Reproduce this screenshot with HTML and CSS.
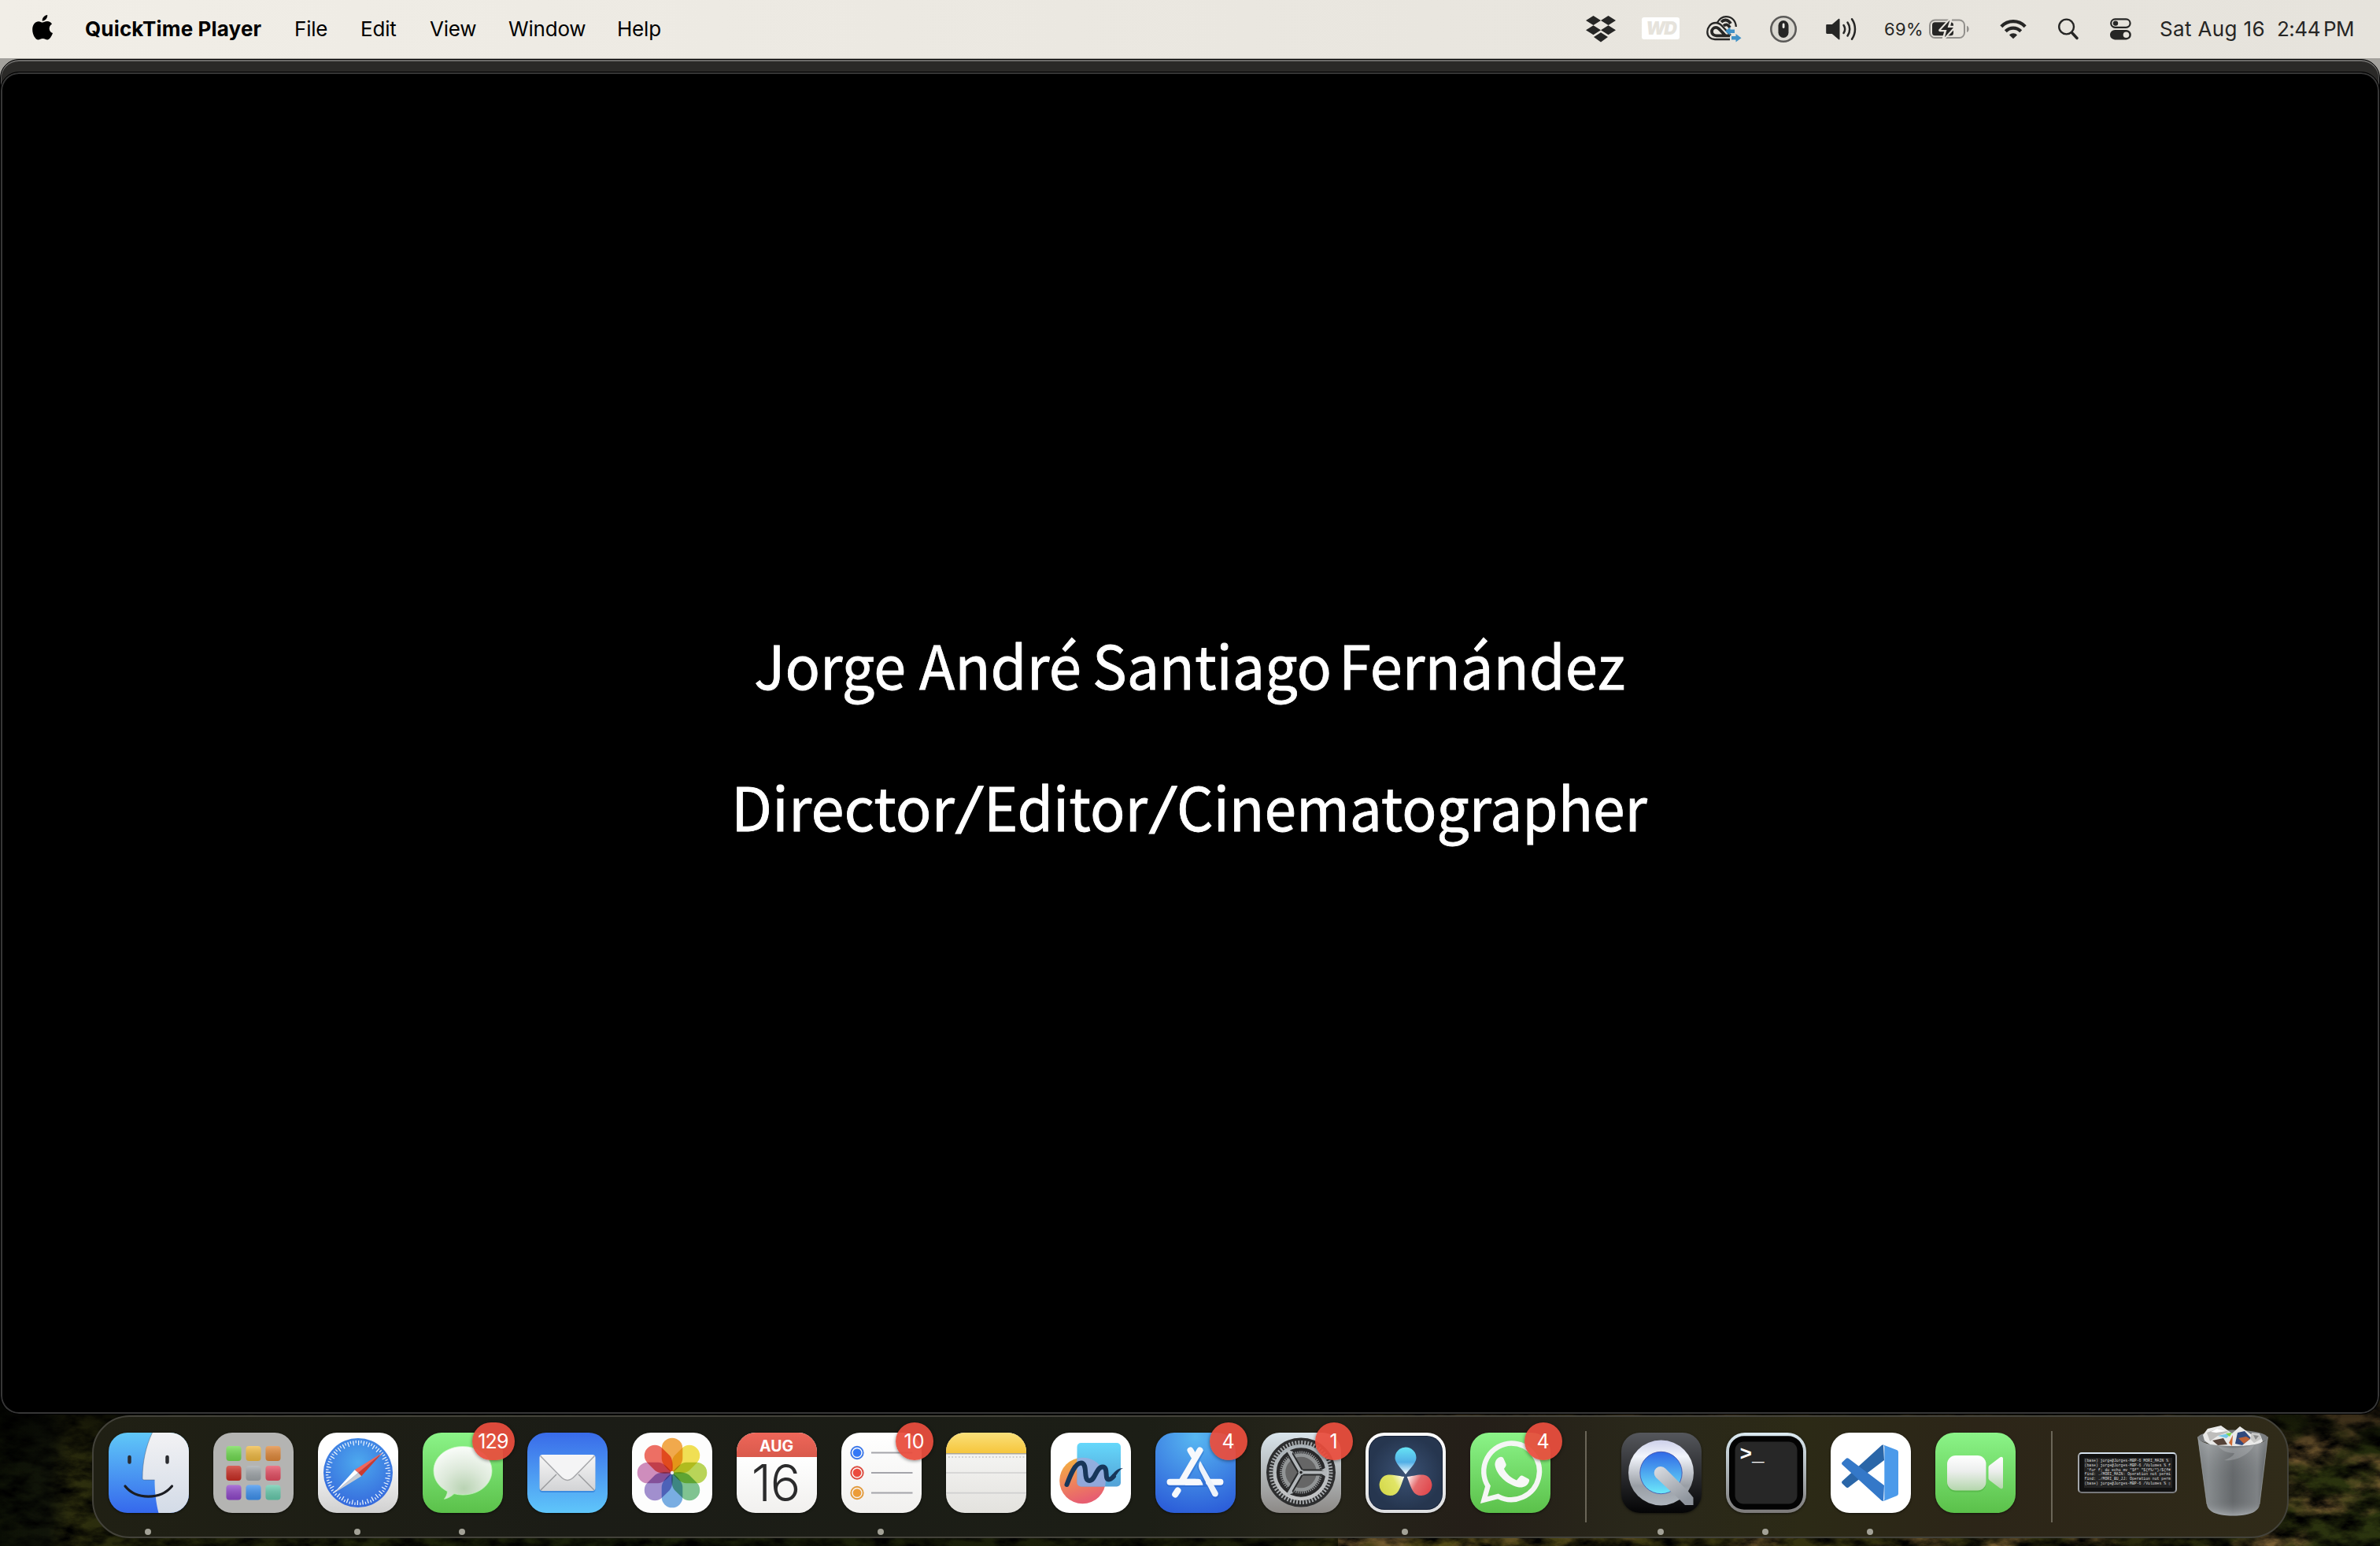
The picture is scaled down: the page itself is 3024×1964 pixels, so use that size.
FILE: index.html
```html
<!DOCTYPE html>
<html lang="en">
<head>
<meta charset="utf-8">
<title>QuickTime Player</title>
<link rel="stylesheet" href="styles.css">
</head>
<body>
<header class="menubar">
  <nav class="menus">
    <svg class="apple" width="26" height="32" viewBox="0 0 26 32"><path d="M13 9.600c1.500 0 3.200-1.500 6-1.500 2.700 0 4.900 1.400 6 3.300-4.800 2.900-4.200 9.700 1 11.700-1.300 3.900-4 8.400-6.800 8.400-2.300 0-3-1.400-5.800-1.400s-3.700 1.400-5.800 1.400C4 31.500.2 25 .2 18.500.2 12 4 8.200 8 8.200c2.300 0 3.700 1.400 5 1.400ZM12.700 7.700c-.3-4 3-7.500 6.500-7.700.4 4.200-3 7.700-6.500 7.700Z"/></svg>
    <span class="menu app">QuickTime Player</span>
    <span class="menu file">File</span>
    <span class="menu edit">Edit</span>
    <span class="menu view">View</span>
    <span class="menu win">Window</span>
    <span class="menu help">Help</span>
  </nav>
  <div class="status">
    <svg width="38" height="34" viewBox="0 0 38 34"><path d="M9.500 0l9.500 6-9.500 6L0 6ZM28.500 0L38 6l-9.500 6L19 6ZM9.500 12.200l9.500 6-9.500 6-9.500-6ZM28.500 12.200l9.500 6-9.500 6-9.500-6ZM19 21.300l9 5.700-9 6.500-9-6.500Z"/></svg>
    <div class="wd">WD</div>
    <svg class="cc" width="46" height="34" viewBox="0 0 46 34" fill="none" stroke="#262625" stroke-width="2.300"><path d="M30 30H11C5 30 1.300 26 1.300 20.500S5.300 9 12 9c3 0 5.500 1.200 8 4l11 12"/><path d="M14 8.500C17 3.500 20.500 1.200 25 1.200c7.500 0 12.500 5.300 12.800 12.800"/><path d="M30 25.300H13c-3.800 0-6-2-6-5s2.200-5.400 5.200-5.400c3.500 0 5.500 3.500 12 10.300" stroke-width="3.800"/><path d="M19 8c4-4 9-3 12 2M22 13c3-3 6-1.500 8 2" stroke-width="3.800"/><path d="M24 19.500l6.500-5v3h5.500v4.500h-5.500v3ZM32 26h5.500v-3l7 5.300-7 5.200v-3H32Z" fill="#3f91c7" stroke="none"/></svg>
    <svg class="mouse" width="34" height="34" viewBox="0 0 34 34"><circle cx="17" cy="17" r="15.700" fill="#dad8d1" stroke="#5b5a58" stroke-width="2.600"/><rect x="10.500" y="6" width="13" height="22" rx="6.500"/><rect x="15.700" y="9.500" width="2.800" height="6.500" rx="1.400" fill="#f2f0ea"/></svg>
    <svg class="speaker" width="40" height="30" viewBox="0 0 40 30"><path d="M1.500 9h6.300L16 2c.8-.6 1.500-.2 1.500.7v24.800c0 .9-.8 1.200-1.500.6L7.800 21H1.500C.6 21 .2 20.500.2 19.600V10.400C.2 9.500.6 9 1.500 9Z"/><path d="M22.500 10c2 3 2 7 0 10M27.500 6.500c3.600 5 3.600 12 0 17M33 2.200c5.300 7.600 5.300 18 0 25.600" fill="none" stroke="#262625" stroke-width="2.500" stroke-linecap="round"/></svg>
    <span class="percent">69%</span>
    <svg class="battery" width="52" height="28" viewBox="0 0 52 28"><rect x="1" y="2.500" width="44" height="22.500" rx="6.500" fill="none" stroke="#92908c" stroke-width="2"/><rect x="4" y="5.300" width="27" height="17" rx="3.500"/><path d="M48 9.700c3.500 1 3.500 7.300 0 8.400Z" fill="#92908c"/><path d="M27.500 1L14 15.500h7.500L18.500 26 32.500 11.500H25Z" stroke="#e8e5de" stroke-width="3.500" stroke-linejoin="round"/><path d="M26.500 2.500L15 15h7.500L19.800 24.500 31 12h-7.500Z"/></svg>
    <svg class="wifi" width="34" height="26" viewBox="0 0 34 26"><path d="M17 25.300l-5-4.800c2.600-3 7.400-3 10 0Z"/><path d="M1.800 9.700c8.400-8.800 22-8.800 30.400 0M7.300 15.700c5.400-5.500 14-5.500 19.400 0" fill="none" stroke="#262625" stroke-width="4.200"/></svg>
    <svg class="search" width="26" height="28" viewBox="0 0 26 28" fill="none" stroke="#262625"><circle cx="10.600" cy="11" r="9.400" stroke-width="2.400"/><path d="M17.500 18.500l6.500 7" stroke-width="3.400" stroke-linecap="round"/></svg>
    <svg class="toggles" width="28" height="28" viewBox="0 0 28 28"><rect x="1.200" y="1.400" width="24.400" height="10.400" rx="5.200" fill="none" stroke="#262625" stroke-width="2.200"/><circle cx="7" cy="6.600" r="3.200"/><rect x="0" y="15" width="26.800" height="12.400" rx="6.200"/><circle cx="20.500" cy="21.200" r="3.800" fill="#e6e3dc"/></svg>
    <span class="date">Sat Aug 16</span>
    <span class="time">2:44<i></i>PM</span>
  </div>
</header>

<main class="desktop">
  <svg class="wallpaper" width="3024" height="190" viewBox="0 0 3024 190" preserveAspectRatio="none">
    <defs>
      <filter id="leaves" x="0" y="0" width="100%" height="100%"><feTurbulence type="fractalNoise" baseFrequency=".03 .06" numOctaves="5" seed="7"/><feColorMatrix values="0 0 0 0 0  0 0 0 0 0  0 0 0 0 0  2.200 0 0 0 -.7"/></filter>
      <filter id="bark" x="0" y="0" width="100%" height="100%"><feTurbulence type="fractalNoise" baseFrequency=".012 .02" numOctaves="5" seed="3"/><feColorMatrix values="0 0 0 0 .24  0 0 0 0 .14  0 0 0 0 .04  0 4 0 0 -1.800"/></filter>
      <linearGradient id="ground"><stop offset="0" stop-color="#0f1406"/><stop offset=".02" stop-color="#12160a"/><stop offset=".03" stop-color="#34350f"/><stop offset=".06" stop-color="#282b0c"/><stop offset=".25" stop-color="#1c240a"/><stop offset=".54" stop-color="#1d2009"/><stop offset=".6" stop-color="#5e5419"/><stop offset=".7" stop-color="#3f3c12"/><stop offset=".9" stop-color="#30300e"/><stop offset="1" stop-color="#2f3a10"/></linearGradient>
      <linearGradient id="dusk" x2="0" y2="1"><stop offset="0" stop-opacity=".75"/><stop offset=".5" stop-opacity=".1"/><stop offset="1" stop-opacity=".1"/></linearGradient>
    </defs>
    <rect width="3024" height="190" fill="url(#ground)"/><rect x="1700" width="1324" height="190" filter="url(#bark)"/><rect width="3024" height="190" filter="url(#leaves)"/><rect width="3024" height="190" fill="url(#dusk)"/>
  </svg>
  <div class="window back"></div>
  <section class="window front">
    <svg class="credits" width="1240" height="320" viewBox="0 0 1240 320">
      <text y="96"><tspan x="58" textLength="193" lengthAdjust="spacingAndGlyphs">Jorge</tspan> <tspan x="268" textLength="206" lengthAdjust="spacingAndGlyphs">André</tspan> <tspan x="488" textLength="304" lengthAdjust="spacingAndGlyphs">Santiago</tspan> <tspan x="801" textLength="364" lengthAdjust="spacingAndGlyphs">Fernández</tspan></text>
      <text y="276"><tspan x="29" textLength="284" lengthAdjust="spacingAndGlyphs">Director</tspan><tspan class="slash" x="313" y="268" textLength="38" lengthAdjust="spacingAndGlyphs">/</tspan><tspan x="350" y="276" textLength="208" lengthAdjust="spacingAndGlyphs">Editor</tspan><tspan class="slash" x="559" y="268" textLength="38" lengthAdjust="spacingAndGlyphs">/</tspan><tspan x="595" y="276" textLength="598" lengthAdjust="spacingAndGlyphs">Cinematographer</tspan></text>
    </svg>
  </section>

  <footer class="dock">
    <div class="tile running"><svg class="icon" viewBox="0 0 102 102"><defs><linearGradient id="fb" x2="0" y2="1"><stop stop-color="#60c8f8"/><stop offset="1" stop-color="#3568ec"/></linearGradient><linearGradient id="fw" x2="0" y2="1"><stop stop-color="#f2f2f4"/><stop offset="1" stop-color="#d3dbe7"/></linearGradient></defs><path fill="url(#fb)" d="M0 0h102v102H0z"/><path fill="url(#fw)" d="M55.500 0H102v102H63.500C60.500 90 58.500 76 58.500 60H45c-1.400 0-2-.8-2-2.200C43 38 47 18 55.500 0Z"/><path d="M55.500 0C47 18 43 38 43 57.800c0 1.400.6 2.200 2 2.200h13.500" fill="none" stroke="#46566b" stroke-opacity=".45"/><path d="M26.500 31v6.500M74.500 31v6.500" stroke="#2b2c30" stroke-width="4.500" stroke-linecap="round"/><path d="M21 68c14 17.500 45 17.500 59.500 0" fill="none" stroke="#1b1d22" stroke-width="3.200" stroke-linecap="round"/></svg></div>

    <div class="tile"><svg class="icon" viewBox="0 0 102 102"><defs><linearGradient id="sh" x2="0" y2="1"><stop stop-color="#fff" stop-opacity=".25"/><stop offset="1" stop-opacity=".14"/></linearGradient></defs><path fill="#b4b4b2" d="M0 0h102v102H0z"/><g><rect x="16.500" y="17" width="19" height="19" rx="4" fill="#72de52"/><rect x="41.500" y="17" width="19" height="19" rx="4" fill="#f3bc43"/><rect x="66.500" y="17" width="19" height="19" rx="4" fill="#e38a3a"/><rect x="16.500" y="42" width="19" height="19" rx="4" fill="#cc2f25"/><rect x="41.500" y="42" width="19" height="19" rx="4" fill="#a2a8ac"/><rect x="66.500" y="42" width="19" height="19" rx="4" fill="#e74e63"/><rect x="16.500" y="66.500" width="19" height="19" rx="4" fill="#9148cc"/><rect x="41.500" y="66.500" width="19" height="19" rx="4" fill="#3f93f1"/><rect x="66.500" y="66.500" width="19" height="19" rx="4" fill="#68ccae"/></g><g fill="url(#sh)"><rect x="16.500" y="17" width="19" height="19" rx="4"/><rect x="41.500" y="17" width="19" height="19" rx="4"/><rect x="66.500" y="17" width="19" height="19" rx="4"/><rect x="16.500" y="42" width="19" height="19" rx="4"/><rect x="41.500" y="42" width="19" height="19" rx="4"/><rect x="66.500" y="42" width="19" height="19" rx="4"/><rect x="16.500" y="66.500" width="19" height="19" rx="4"/><rect x="41.500" y="66.500" width="19" height="19" rx="4"/><rect x="66.500" y="66.500" width="19" height="19" rx="4"/></g></svg></div>

    <div class="tile running"><svg class="icon" viewBox="0 0 102 102"><defs><linearGradient id="sw" x2="0" y2="1"><stop offset=".3" stop-color="#fff"/><stop offset="1" stop-color="#d0d0d0"/></linearGradient><radialGradient id="sb" cx=".5" cy=".35" r=".65"><stop stop-color="#4da9ee"/><stop offset="1" stop-color="#3569dc"/></radialGradient></defs><path fill="url(#sw)" d="M0 0h102v102H0z"/><circle cx="51" cy="51" r="44" fill="url(#sb)"/><circle cx="51" cy="51" r="38" fill="none" stroke="#e5f0fc" stroke-width="6" stroke-dasharray="1.300 5.333" pathLength="238.760"/><circle cx="51" cy="51" r="39.500" fill="none" stroke="#e5f0fc" stroke-width="3.500" stroke-dasharray="1.200 5.433" stroke-dashoffset="-3.300" pathLength="238.760"/><path d="M82 25.500L46.700 47.300 51 51Z" fill="#f2665a"/><path d="M82 25.500L55.200 55.200 51 51Z" fill="#cb3a30"/><path d="M20 77L46.700 47.300 51 51Z" fill="#fff"/><path d="M20 77l35.200-21.800L51 51Z" fill="#c9ccd2"/></svg></div>

    <div class="tile running"><svg class="icon" viewBox="0 0 102 102"><defs><linearGradient id="gr" x2="0" y2="1"><stop stop-color="#8bf488"/><stop offset="1" stop-color="#5bc14a"/></linearGradient><radialGradient id="bub" cx=".52" cy=".8" r=".85"><stop stop-color="#b9d3b3"/><stop offset=".45" stop-color="#dde9da"/><stop offset="1" stop-color="#fdfffd"/></radialGradient></defs><path fill="url(#gr)" d="M0 0h102v102H0z"/><path d="M51 17.500c21 0 37 13.500 37 30.800S72 79 51 79c-4 0-7.500-.5-11-1.400C36.500 81 32 83.500 27.500 84.300c2-2.500 3.800-6 4-9.600C20.500 69 14 59.500 14 48.300 14 31 30 17.500 51 17.500Z" fill="url(#bub)" stroke="#c5f7c0" stroke-width=".8"/></svg><b class="badge wide">129</b></div>

    <div class="tile"><svg class="icon" viewBox="0 0 102 102"><defs><linearGradient id="mb" x2="0" y2="1"><stop stop-color="#396be9"/><stop offset="1" stop-color="#5fc6fa"/></linearGradient><linearGradient id="mw" x2="0" y2="1"><stop stop-color="#f7f7f7"/><stop offset="1" stop-color="#d2d3d5"/></linearGradient></defs><path fill="url(#mb)" d="M0 0h102v102H0z"/><rect x="15.500" y="30" width="71" height="46" rx="4" fill="#1c64c8" opacity=".45"/><rect x="15.500" y="28" width="71" height="46" rx="4" fill="url(#mw)"/><path d="M17 73l20-20M85 73L65 53" stroke="#98999c" stroke-width="1.400"/><path d="M16.500 29.500L42 55.500c6 6.500 12 6.500 18 0L85.500 29.500" fill="#f4f4f5" stroke="#a6a7aa" stroke-width="1.500"/></svg></div>

    <div class="tile"><svg class="icon petals" viewBox="0 0 102 102"><defs><path id="petal" d="M51 51C44 46 37.700 39 37.700 33V20a13.300 13.300 0 0 1 26.600 0v13c0 6-6.300 13-13.300 18Z"/></defs><path fill="#fdfdfd" d="M0 0h102v102H0z"/><use href="#petal" fill="#f2a33c"/><use href="#petal" fill="#f1df45" transform="rotate(45 51 51)"/><use href="#petal" fill="#b5d34b" transform="rotate(90 51 51)"/><use href="#petal" fill="#76c089" transform="rotate(135 51 51)"/><use href="#petal" fill="#6fa8e2" transform="rotate(180 51 51)"/><use href="#petal" fill="#9a86cc" transform="rotate(225 51 51)"/><use href="#petal" fill="#cc84b9" transform="rotate(270 51 51)"/><use href="#petal" fill="#ee6458" transform="rotate(315 51 51)"/><circle cx="51" cy="51" r="2.200" fill="#eee"/></svg></div>

    <div class="tile"><div class="icon calendar"><span class="month">AUG</span><span class="day">16</span></div></div>

    <div class="tile running"><svg class="icon" viewBox="0 0 102 102"><defs><linearGradient id="pw" x2="0" y2="1"><stop stop-color="#fff"/><stop offset="1" stop-color="#f1f0ee"/></linearGradient></defs><path fill="url(#pw)" d="M0 0h102v102H0z"/><g stroke="#a4a4aa" stroke-width="1.800"><path d="M38 25.500h52.500M38 51h52.500M38 76.500h52.500"/></g><g fill="none" stroke-width="1.900"><circle cx="20" cy="25.500" r="7.700" stroke="#3b77e8"/><circle cx="20" cy="51" r="7.700" stroke="#dc4a3e"/><circle cx="20" cy="76.500" r="7.700" stroke="#e29a3c"/></g><circle cx="20" cy="25.500" r="5.300" fill="#3478f6"/><circle cx="20" cy="51" r="5.300" fill="#eb4b3e"/><circle cx="20" cy="76.500" r="5.300" fill="#ec9c38"/></svg><b class="badge">10</b></div>

    <div class="tile"><svg class="icon" viewBox="0 0 102 102"><defs><linearGradient id="ny" x2="0" y2="1"><stop stop-color="#fae07a"/><stop offset="1" stop-color="#f6c63c"/></linearGradient><linearGradient id="nw" x2="0" y2="1"><stop stop-color="#fafaf9"/><stop offset="1" stop-color="#e3e2de"/></linearGradient></defs><path fill="url(#nw)" d="M0 0h102v102H0z"/><path fill="url(#ny)" d="M0 0h102v26H0z"/><path stroke="#a9a69c" stroke-width="1.600" d="M0 26.800h102"/><path stroke="#c2c2c0" stroke-width="1.700" stroke-dasharray="1.700 2.600" d="M3 31h98"/><path stroke="#cfcfd0" stroke-width="1.700" d="M0 51h102M0 76.700h102"/></svg></div>

    <div class="tile"><svg class="icon" viewBox="0 0 102 102"><defs><linearGradient id="fo" x2=".3" y2="1"><stop stop-color="#f3b63d"/><stop offset=".5" stop-color="#f08a58"/><stop offset="1" stop-color="#e75f70"/></linearGradient><linearGradient id="fs" x2="0" y2="1"><stop stop-color="#65d8fb"/><stop offset="1" stop-color="#53a1d6"/></linearGradient></defs><path fill="#fff" d="M0 0h102v102H0z"/><circle cx="40.500" cy="61" r="29.300" fill="url(#fo)"/><rect x="33.500" y="13" width="55.500" height="55.500" rx="5" fill="url(#fs)"/><path d="M33.500 32.600a29.300 29.300 0 0 1 35.400 35.900H38.500a5 5 0 0 1-5-5Z" fill="#a9a8da" opacity=".7"/><path d="M20.500 66C25 54 31 38.500 38.500 38.500c9.500 0 2 22.500 10.500 22.500 8 0 8.500-17.500 17-17.500 8 0 1.500 16 8 16 2.500 0 4-1.500 6-4" fill="none" stroke="#17365a" stroke-width="6" stroke-linecap="round"/><path d="M77 56c4-7 8-11 15-11-5 2-8 9-12 13Z" fill="#17365a"/></svg></div>

    <div class="tile"><svg class="icon" viewBox="0 0 102 102"><defs><radialGradient id="as" cx=".5" cy=".05" r="1"><stop stop-color="#58b8f2"/><stop offset="1" stop-color="#2b5cd8"/></radialGradient></defs><path fill="url(#as)" d="M0 0h102v102H0z"/><g stroke="#1c4fb8" stroke-opacity=".3" stroke-width="9" stroke-linecap="round" transform="translate(0 1.500)"><path d="M18.500 63h64M57 23L35 61M57.500 42L76.500 78"/></g><g stroke="#f7f9fc" stroke-width="8" stroke-linecap="round"><path d="M44.500 22.500L49 30"/><path d="M18.500 62.700h36M68 62.700h14.500"/><path d="M56.500 22.500L34.500 60"/><path d="M28.500 73.500l-3.300 5"/></g><path d="M57 36c-3 5-2 9 0 13l15.500 30.500c2.500 4 9 1.500 7-3.500Z" fill="#eef3fa"/><path d="M38 58.700h12c6 0 10 3 10.500 8H38Z" fill="#f7f9fc"/></svg><b class="badge">4</b></div>

    <div class="tile nudged"><svg class="icon" viewBox="0 0 102 102"><defs><linearGradient id="se" x2="0" y2="1"><stop stop-color="#d9e5ec"/><stop offset="1" stop-color="#8c8986"/></linearGradient><linearGradient id="sm" x2="0" y2="1"><stop stop-color="#aab2b7"/><stop offset="1" stop-color="#c3c4c5"/></linearGradient></defs><path fill="url(#se)" d="M0 0h102v102H0z"/><circle cx="51" cy="50.500" r="44" fill="#2d2e2f"/><circle cx="51" cy="50.500" r="38" fill="none" stroke="#a9adb0" stroke-width="5" stroke-dasharray="1.900 2.080"/><circle cx="51" cy="50.500" r="33.500" fill="#29292a" stroke="url(#sm)" stroke-width="4.600"/><circle cx="51" cy="50.500" r="25.500" fill="none" stroke="#8f9294" stroke-width="3" stroke-dasharray="1.400 1.267"/><circle cx="51" cy="50.500" r="22" fill="#666" stroke="#929596" stroke-width="4.500"/><g stroke="#292a2b" stroke-width="8"><path d="M51 50.500h31M51 50.500L35.500 24M51 50.500L35.500 77"/></g><g stroke="#b3b7ba" stroke-width="4" fill="none"><path d="M51 50.500h33M51 50.500L34.500 22M51 50.500L34.500 79"/></g><path d="M84 50.500l-7-3 7-4zM84 50.500l-7 2 7 4zM34 22l7 2-3 6zM34 79l7-2-3-6z" fill="#b3b7ba"/><circle cx="51" cy="50.500" r="3.500" fill="#a5aaad"/><circle cx="51" cy="50.500" r="1.700" fill="#222"/></svg><b class="badge">1</b></div>

    <div class="tile running"><svg class="icon" viewBox="0 0 102 102"><defs><linearGradient id="dv" x2="0" y2="1"><stop stop-color="#fff"/><stop offset="1" stop-color="#dcdddf"/></linearGradient><radialGradient id="dn"><stop stop-color="#3b5275"/><stop offset="1" stop-color="#26364f"/></radialGradient><linearGradient id="d1" x2="0" y2="1"><stop stop-color="#66e4f4"/><stop offset=".55" stop-color="#52afe6"/><stop offset="1" stop-color="#fff"/></linearGradient><linearGradient id="d2" x2="0" y2="1"><stop stop-color="#d5d94c"/><stop offset=".6" stop-color="#e1e566"/><stop offset="1" stop-color="#fff"/></linearGradient><linearGradient id="d3" x2="0" y2="1"><stop stop-color="#e0484d"/><stop offset=".55" stop-color="#e56a6c"/><stop offset="1" stop-color="#fff"/></linearGradient></defs><path fill="url(#dv)" d="M0 0h102v102H0z"/><rect x="4" y="4" width="94" height="94" rx="20" fill="#17233a"/><rect x="5" y="5" width="92" height="92" rx="19" fill="url(#dn)"/><path fill="url(#d1)" d="M51 53C47.500 48 37.500 39 37.500 32a13.500 13.500 0 0 1 27 0C64.500 39 54.500 48 51 53Z"/><path fill="url(#d2)" transform="rotate(-120 51 55)" d="M51 53C47.500 48 37.500 39 37.500 32a13.500 13.500 0 0 1 27 0C64.500 39 54.500 48 51 53Z"/><path fill="url(#d3)" transform="rotate(120 51 55)" d="M51 53C47.500 48 37.500 39 37.500 32a13.500 13.500 0 0 1 27 0C64.500 39 54.500 48 51 53Z"/></svg></div>

    <div class="tile"><svg class="icon" viewBox="0 0 102 102"><path fill="url(#gr)" d="M0 0h102v102H0z"/><path d="M52 13.500a35.800 35.800 0 1 1-16.500 67.500L17.500 85.500l5-17.500A35.800 35.800 0 0 1 52 13.500Z" fill="none" stroke="#f5f6f5" stroke-width="6.400"/><path d="M38 31c1.700-.5 3.600 0 4.500 2l3 6.800c.6 1.500-.1 3-2.500 6.200 4 7.500 9 11.500 16 14.500l4.300-5c1-1.200 2-1.300 3.300-.8l7.500 4c1.300.8 1.200 2 .7 3.600-2.200 6-8.200 8.200-14 6.900C46 65.500 34 54 31.600 42c-.7-5 2-9.800 6.400-11Z" fill="#f7f8f7"/></svg><b class="badge">4</b></div>

    <i class="rule first"></i>

    <div class="tile running"><svg class="icon" viewBox="0 0 102 102"><defs><linearGradient id="qb" x2="0" y2="1"><stop stop-color="#55575c"/><stop offset="1" stop-color="#040405"/></linearGradient><linearGradient id="qr" x2="0" y2="1"><stop stop-color="#cdd0ea"/><stop offset=".25" stop-color="#f2f5fc"/><stop offset=".7" stop-color="#999ea5"/><stop offset="1" stop-color="#aeb5bd"/></linearGradient><linearGradient id="qi" x2="0" y2="1"><stop stop-color="#3068e6"/><stop offset="1" stop-color="#6ce9fa"/></linearGradient><linearGradient id="qt" x2=".6" y2="1"><stop stop-color="#dcdfe4"/><stop offset="1" stop-color="#8f959d"/></linearGradient></defs><path fill="url(#qb)" d="M0 0h102v102H0z"/><circle cx="50.500" cy="51" r="41.500" fill="url(#qr)"/><circle cx="50.500" cy="51" r="26.700" fill="url(#qi)" stroke="#3d4aa8" stroke-width=".8"/><path d="M44 57a8.200 8.200 0 0 1 12-11.500L85 74.500l6.500 8V92H81l-7-7Z" fill="url(#qt)"/></svg></div>

    <div class="tile running"><svg class="icon" viewBox="0 0 102 102"><defs><linearGradient id="te" x2="0" y2="1"><stop stop-color="#dcebf2"/><stop offset="1" stop-color="#7c7a79"/></linearGradient></defs><path fill="url(#te)" d="M0 0h102v102H0z"/><rect x="4" y="4.300" width="94" height="93.400" rx="19" fill="#030303"/><rect x="11.500" y="11.500" width="79" height="79" rx="11" fill="#272727"/><text class="prompt" x="17.500" y="34.500">&gt;_</text></svg></div>

    <div class="tile running"><svg class="icon" viewBox="0 0 102 102"><path fill="#fff" d="M0 0h102v102H0z"/><path d="M67 15.500c-1.500 0-2.500.7-3.500 1.700L14.800 61.500c-1 1-1 2.200 0 3.200l4.700 4.600c1 .9 2 1 3.200.2L68 35Z" fill="#2a66a8"/><path d="M67 87c-1.500 0-2.500-.7-3.500-1.700L14.800 40.700c-1-1-1-2.200 0-3.200l4.700-4.600c1-.9 2-1 3.200-.2L68 67Z" fill="#3478c8"/><path d="M67 15.500L84 22c1.300.6 2 1.500 2 3v52.300c0 1.500-.7 2.400-2 3L67 87c1-1 1.300-2 1.300-3.500V19c0-1.500-.3-2.500-1.300-3.500Z" fill="#4b9aea"/></svg></div>

    <div class="tile"><svg class="icon" viewBox="0 0 102 102"><defs><linearGradient id="vc" x2="0" y2="1"><stop stop-color="#fff"/><stop offset=".45" stop-color="#eceeed"/><stop offset="1" stop-color="#b4d6ac"/></linearGradient></defs><path fill="url(#gr)" d="M0 0h102v102H0z"/><rect x="15" y="30.500" width="49.500" height="45" rx="11" fill="#44a237" opacity=".4"/><rect x="15" y="29" width="49.500" height="44.500" rx="11" fill="url(#vc)"/><path d="M69.500 41L82 31.500c2-1.500 4-.6 4 1.600v35.800c0 2.200-2 3.100-4 1.600L69.500 61c-1.500-1.200-2-2-2-3.500v-13c0-1.500.5-2.400 2-3.500Z" fill="url(#vc)"/></svg></div>

    <i class="rule second"></i>

    <div class="minimized"><pre>(base) jorge@Jorges-MBP-6 MORI_MAIN %
(base) jorge@Jorges-MBP-6 /Volumes % f
 'for f; do echo mv "$f" "${f%/*}/${f#
find: ./MORI_MAIN: Operation not permi
find: ./MORI_BU_JJ: Operation not perm
(base) jorge@Jorges-MBP-6 /Volumes % ▯</pre></div>

    <svg class="trash" width="92" height="118" viewBox="0 0 92 118"><defs><linearGradient id="tb"><stop stop-color="#7c8184"/><stop offset=".15" stop-color="#8e9396"/><stop offset=".5" stop-color="#696d70"/><stop offset=".85" stop-color="#85898c"/><stop offset="1" stop-color="#5c6063"/></linearGradient><linearGradient id="tf" x2="0" y2="1"><stop stop-color="#fff" stop-opacity=".2"/><stop offset=".5" stop-color="#333" stop-opacity=".08"/><stop offset=".8" stop-color="#444" stop-opacity=".1"/><stop offset="1" stop-color="#dde2e6" stop-opacity=".45"/></linearGradient></defs><ellipse cx="46" cy="16.500" rx="44.500" ry="10" fill="#7b7e80"/><path d="M8 13L14 5 31 1l14 10 10-9 14 10 12 1 3 8-9 8H22L10 20Z" fill="#e9e9e8"/><path d="M13 10l14-5 14 4-14 5-10 7Z" fill="#bebdbb"/><path d="M18 9l8-4 12 3-13 2Z" fill="#fff"/><path d="M27 14l18-4-7 7Z" fill="#74c8e8"/><path d="M37 11l8-1-3 5Z" fill="#80d749"/><path d="M20 20l14-3 5 8-12 1Z" fill="#554339"/><path d="M41 23l5-10-1 14Z" fill="#ce6b34"/><path d="M49 24l3-14 9-2 8 9-11 9Z" fill="#31497d"/><path d="M53 17l10-2 5 3-8 6Z" fill="#bf6236"/><path d="M70 10l10 1 2 7-9 5-5-5Z" fill="#c8c8c6"/><path d="M72 13l7 1-4 5Z" fill="#898a89"/><path d="M1.500 16C4 23.500 20 27 46 27s42-3.500 44.500-11L80 101c-.8 9-12 14.500-33.500 14.500S14 110 13 101Z" fill="url(#tb)"/><path d="M1.500 16C4 23.500 20 27 46 27s42-3.500 44.500-11L80 101c-.8 9-12 14.500-33.500 14.500S14 110 13 101Z" fill="url(#tf)"/><path d="M27 27c14 4 32 3 46-1-7 14-27 21-38 19 8-3 12-6 13-9-10 0-17-4-21-9Z" fill="#c3c7c9" opacity=".3"/><path d="M1.500 15l11.500 86M90.500 15L80 101" stroke="#a9aeb1" stroke-opacity=".55"/></svg>
  </footer>
</main>
</body>
</html>
```
FILE: styles.css
```css
* { box-sizing: border-box; }
body {
  margin: 0;
  width: 3024px;
  height: 1964px;
  overflow: hidden;
  display: flex;
  flex-direction: column;
  background: #000;
  font-family: Inter, "Liberation Sans", sans-serif;
}
svg { display: block; flex: none; }

/* Menu bar */
.menubar {
  height: 74px;
  flex: none;
  display: flex;
  justify-content: space-between;
  align-items: center;
  background: linear-gradient(90deg, #f1eee7, #e9e6df 60%, #e6e3dc);
  font-size: 26px;
  white-space: nowrap;
}
.menus { display: flex; align-items: center; padding-left: 41px; height: 74px; }
.apple { margin: -4px 41px 0 0; }
.menu { color: #000; letter-spacing: -.2px; padding-bottom: 2px; }
.app { width: 266px; font-weight: 700; letter-spacing: .15px; }
.file { width: 84px; }
.edit { width: 88px; }
.view { width: 100px; }
.win { width: 138px; }
.status {
  display: flex;
  align-items: center;
  width: 1009px;
  height: 74px;
  color: #262625;
  fill: #262625;
}
.wd {
  width: 48px;
  height: 28px;
  margin: -2px 0 0 33px;
  border-radius: 3px;
  background: #fff;
  color: #e6e3dc;
  font: italic 900 23px/28px Inter, sans-serif;
  letter-spacing: -2px;
  text-align: center;
}
.cc { margin-left: 34px; }
.mouse { margin-left: 35px; }
.speaker { margin-left: 37px; }
.percent { width: 57px; margin-left: 34px; font-size: 22px; letter-spacing: .3px; padding-bottom: 1px; }
.battery { margin-top: -1px; }
.wifi { margin-left: 38px; }
.search { margin-left: 40px; }
.toggles { margin-left: 40px; }
.date { width: 149px; margin-left: 35px; letter-spacing: .35px; padding-bottom: 2px; }
.time { letter-spacing: -.5px; padding-bottom: 2px; }
.time i { display: inline-block; width: 4px; }

/* Desktop and windows */
.desktop {
  position: relative;
  height: 1890px;
  display: flex;
  flex-direction: column;
  align-items: center;
  background: linear-gradient(#a3a19c 0 40px, #060703 60px);
}
.wallpaper { position: absolute; left: 0; bottom: 0; }
.window {
  width: 3024px;
  border: 1px solid #000;
  border-radius: 24px;
}
.back {
  position: absolute;
  top: 1px;
  left: 0;
  height: 1721px;
  background: #2a2927;
  box-shadow: inset 0 2px 0 #6b6a68, inset 0 0 0 1px #555;
}
.front {
  position: relative;
  flex: none;
  height: 1706px;
  margin-top: 17px;
  padding-top: 688px;
  background: #000;
  box-shadow: inset 0 0 0 2px #363636;
}
.credits {
  margin-left: 899px;
  overflow: visible;
  fill: #fff;
  stroke: #fff;
  stroke-width: .8px;
  font: 76px "Noto Sans CJK JP", "Noto Sans", sans-serif;
}
.slash { font-size: 62px; }

/* Dock */
.dock {
  position: relative;
  flex: none;
  width: 2791px;
  height: 156px;
  margin-top: 1px;
  padding-left: 19px;
  display: flex;
  align-items: flex-start;
  border: 2px solid #43423a;
  border-radius: 48px;
  background: linear-gradient(90deg, #202014, #1b1c16 22%, #1c1e16 48%, #26251a 56%, #241e18 63%, #29271a 70%, #2c2a16 78%, #2c2518 86%, #302b19);
}
.tile { position: relative; width: 102px; height: 134px; margin: 20px 31px 0 0; flex: none; }
.nudged { margin-left: 1px; }
.icon {
  width: 102px;
  height: 102px;
  overflow: hidden;
  border-radius: 24px;
  box-shadow: 0 1px 3px #0008;
}
.running::after {
  content: "";
  position: absolute;
  left: 46px;
  top: 122px;
  width: 8px;
  height: 8px;
  border-radius: 4px;
  background: #a3a297;
}
.badge {
  position: absolute;
  right: -15px;
  top: -13px;
  min-width: 48px;
  height: 48px;
  border-radius: 24px;
  background: #e94e3ef0;
  color: #fff;
  font-size: 25px;
  font-weight: 400;
  line-height: 49px;
  text-align: center;
  box-shadow: 0 1px 4px #0007;
}
.wide { min-width: 54px; letter-spacing: -.8px; }
.petals { isolation: isolate; }
.petals use { mix-blend-mode: multiply; opacity: .92; }
.calendar {
  display: flex;
  flex-direction: column;
  align-items: center;
  background: linear-gradient(#fff 30%, #f1f0ee);
}
.month {
  width: 102px;
  height: 31px;
  flex: none;
  background: linear-gradient(#ee6659, #d95a4c);
  color: #fff;
  font-size: 19.500px;
  font-weight: 700;
  line-height: 34px;
  text-align: center;
}
.day { width: 102px; padding-right: 2px; color: #2b2b2c; font-size: 64px; font-weight: 300; line-height: 65px; letter-spacing: -1px; text-align: center; }
.prompt { font: bold 26px "Liberation Mono", monospace; fill: #fff; }
.rule { width: 2px; height: 116px; background: #6a6557; flex: none; }
.first { margin: 18px 44px 0 13px; }
.second { margin: 18px 32px 0 14px; }
.minimized {
  width: 126px;
  height: 52px;
  margin-top: 45px;
  padding: 5px 5px 5px 6px;
  flex: none;
  border: 2px solid;
  border-color: #d5e2ee #a3a6aa #77787b;
  border-radius: 5px;
  background: #101010;
}
.minimized pre {
  width: 112px;
  height: 38px;
  margin: 0;
  padding: 1px 0 0 1px;
  background: #232323;
  color: #ddd;
  font: 4.800px/5.800px "Liberation Mono", monospace;
}
.trash { margin: 10px 0 0 25px; }
```
